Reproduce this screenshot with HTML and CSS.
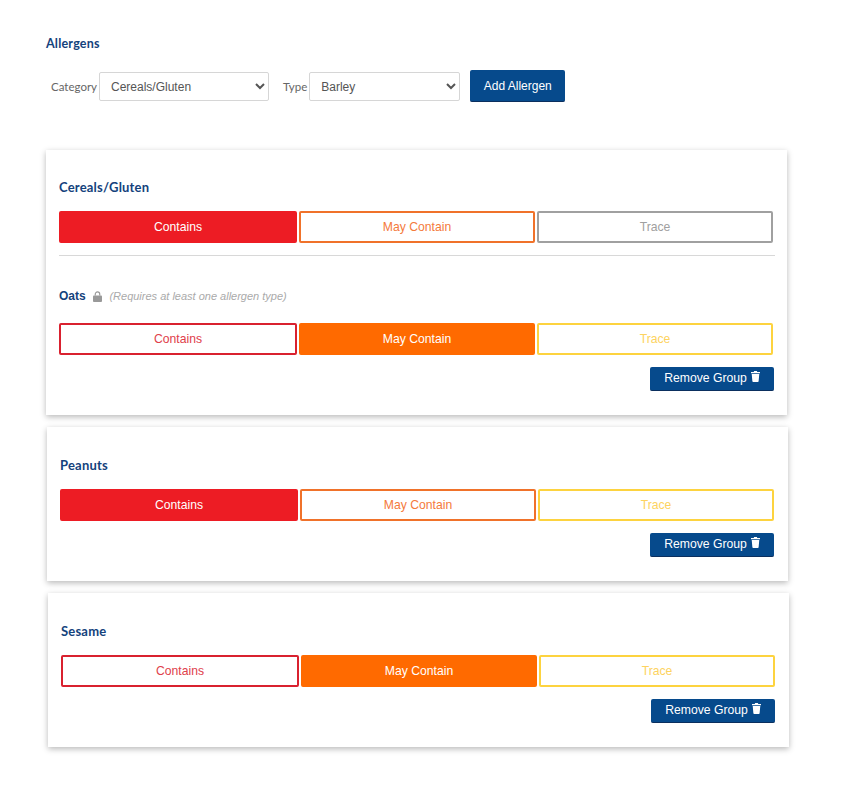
FILE: index.html
```html
<!DOCTYPE html>
<html lang="en">
<head>
    <meta charset="UTF-8">
    <meta name="viewport" content="width=device-width, initial-scale=1.0">
    <title>Allergens</title>
    <link rel="stylesheet" href="styles.css">
</head>
<body>
    <div class="page">
        <h2 class="page-title">Allergens</h2>
        <form class="add-form" onsubmit="return false;">
            <label class="add-label" for="category">Category</label>
            <select class="add-select category-select" id="category">
                <option>Cereals/Gluten</option>
            </select>
            <label class="add-label type-label" for="type">Type</label>
            <select class="add-select type-select" id="type">
                <option>Barley</option>
            </select>
            <button type="submit" class="add-button">Add Allergen</button>
        </form>

        <div class="card first">
            <div class="group">
                <h3 class="group-title">Cereals/Gluten</h3>
                <div class="choices">
                    <button class="choice contains on">Contains</button>
                    <button class="choice may">May Contain</button>
                    <button class="choice trace off">Trace</button>
                </div>
            </div>
            <hr class="divider">
            <div class="group sub-group">
                <h3 class="group-title"><span class="sub-name">Oats</span>
                    <svg class="lock" viewBox="0 0 10 12" width="9" height="11" aria-hidden="true">
                        <path d="M1 5h8a1 1 0 0 1 1 1v5a1 1 0 0 1-1 1H1a1 1 0 0 1-1-1V6a1 1 0 0 1 1-1z"/>
                        <path d="M2.5 5V3.4a2.5 2.5 0 0 1 5 0V5" fill="none" stroke="#999" stroke-width="1.3"/>
                    </svg>
                    <span class="note">(Requires at least one allergen type)</span>
                </h3>
                <div class="choices">
                    <button class="choice contains">Contains</button>
                    <button class="choice may on">May Contain</button>
                    <button class="choice trace">Trace</button>
                </div>
            </div>
            <div class="card-actions">
                <button class="remove-button">Remove Group
                    <svg class="trash" viewBox="0 0 10 12" width="9" height="11" aria-hidden="true">
                        <path d="M3.5 0h3l.5 1h3v1.5H0V1h3z"/>
                        <path d="M.8 3.3h8.4L8.5 11a1 1 0 0 1-1 1h-5a1 1 0 0 1-1-1z"/>
                    </svg>
                </button>
            </div>
        </div>

        <div class="card shift-1">
            <div class="group">
                <h3 class="group-title">Peanuts</h3>
                <div class="choices">
                    <button class="choice contains on">Contains</button>
                    <button class="choice may">May Contain</button>
                    <button class="choice trace">Trace</button>
                </div>
            </div>
            <div class="card-actions">
                <button class="remove-button">Remove Group
                    <svg class="trash" viewBox="0 0 10 12" width="9" height="11" aria-hidden="true">
                        <path d="M3.5 0h3l.5 1h3v1.5H0V1h3z"/>
                        <path d="M.8 3.3h8.4L8.5 11a1 1 0 0 1-1 1h-5a1 1 0 0 1-1-1z"/>
                    </svg>
                </button>
            </div>
        </div>

        <div class="card shift-2">
            <div class="group">
                <h3 class="group-title">Sesame</h3>
                <div class="choices">
                    <button class="choice contains">Contains</button>
                    <button class="choice may on">May Contain</button>
                    <button class="choice trace">Trace</button>
                </div>
            </div>
            <div class="card-actions">
                <button class="remove-button">Remove Group
                    <svg class="trash" viewBox="0 0 10 12" width="9" height="11" aria-hidden="true">
                        <path d="M3.5 0h3l.5 1h3v1.5H0V1h3z"/>
                        <path d="M.8 3.3h8.4L8.5 11a1 1 0 0 1-1 1h-5a1 1 0 0 1-1-1z"/>
                    </svg>
                </button>
            </div>
        </div>
    </div>
</body>
</html>
```

FILE: styles.css
```css
/* Basic Reset */
* {
    margin: 0;
    padding: 0;
    box-sizing: border-box;
    font-family: "Liberation Sans", Arial, sans-serif;
}

body {
    background-color: #ffffff;
    color: #555;
}

.page {
    width: 850px;
    height: 794px;
    padding: 37px 0 0 46px;
}

/* Top form */
.page-title,
.group-title {
    font-family: Lato, sans-serif;
    font-size: 13px;
    font-weight: 700;
    line-height: 14px;
    letter-spacing: 0.2px;
    color: #14427c;
}

.page-title {
    font-size: 12.5px;
}

.add-form {
    display: flex;
    align-items: center;
    height: 32px;
    margin-top: 19px;
    padding-left: 5px;
}

.add-label {
    font-family: Lato, sans-serif;
    font-size: 11.5px;
    color: #666;
    margin-right: 2px;
}

.type-label {
    margin-left: 14px;
}

.add-select {
    height: 29px;
    margin-top: 1px;
    padding-left: 7px;
    border: 1px solid #d6d6d6;
    border-radius: 2px;
    background-color: #fff;
    font-size: 12px;
    color: #555;
    outline: none;
}

.category-select {
    width: 170px;
}

.type-select {
    width: 151px;
}

.add-button {
    width: 95px;
    height: 32px;
    margin-left: 10px;
    border: none;
    border-bottom: 1px solid #0b2f5e;
    border-radius: 2px;
    background-color: #064a8c;
    color: #fff;
    font-size: 12px;
}

/* Cards */
.card {
    width: 741px;
    height: 154px;
    margin-top: 12px;
    padding: 31px 14px 0 13px;
    background-color: #fff;
    box-shadow: 0 2px 6px rgba(0, 0, 0, 0.28);
}

.card.first {
    height: 265px;
    margin-top: 48px;
    padding-top: 30px;
}

.shift-1 {
    margin-left: 1px;
}

.shift-2 {
    margin-left: 2px;
}

.choices {
    display: flex;
    gap: 2px;
    margin-top: 17px;
}

.choice {
    flex: 1;
    height: 32px;
    border: 2px solid;
    border-radius: 2px;
    background-color: #fff;
    font-size: 12.2px;
}

.choice.contains {
    flex: 0 0 238px;
}

.contains {
    border-color: #d9212f;
    color: #e0404b;
}

.may {
    border-color: #f0722a;
    color: #f47a3c;
}

.trace {
    border-color: #fdd33f;
    color: #fdd360;
}

.trace.off {
    border-color: #a0a0a0;
    color: #a0a0a0;
}

.contains.on {
    background-color: #ed1c24;
    border-color: #ed1c24;
    color: #fff;
}

.may.on {
    background-color: #ff6a00;
    border-color: #ff6a00;
    color: #fff;
}

.divider {
    margin: 12px -2px 0 0;
    border: none;
    border-top: 1px solid #d8d8d8;
}

.sub-group {
    margin-top: 32px;
}

.sub-group .choices {
    margin-top: 20px;
}

.sub-name {
    font-size: 12px;
    letter-spacing: 0;
}

.lock {
    margin: 0 4px 0 4px;
    vertical-align: -2px;
    fill: #999;
}

.note {
    font-size: 11px;
    font-weight: 400;
    font-style: italic;
    letter-spacing: 0;
    color: #aaa;
}

.card-actions {
    display: flex;
    justify-content: flex-end;
    margin-top: 12px;
}

.first .card-actions {
    margin-right: -1px;
}

.remove-button {
    display: flex;
    align-items: center;
    justify-content: center;
    gap: 4px;
    width: 124px;
    height: 24px;
    padding-bottom: 2px;
    border: none;
    border-bottom: 1px solid #0b2f5e;
    border-radius: 2px;
    background-color: #064a8c;
    color: #fff;
    font-size: 12.2px;
}

.trash {
    fill: #fff;
    margin-bottom: 2px;
}
```
